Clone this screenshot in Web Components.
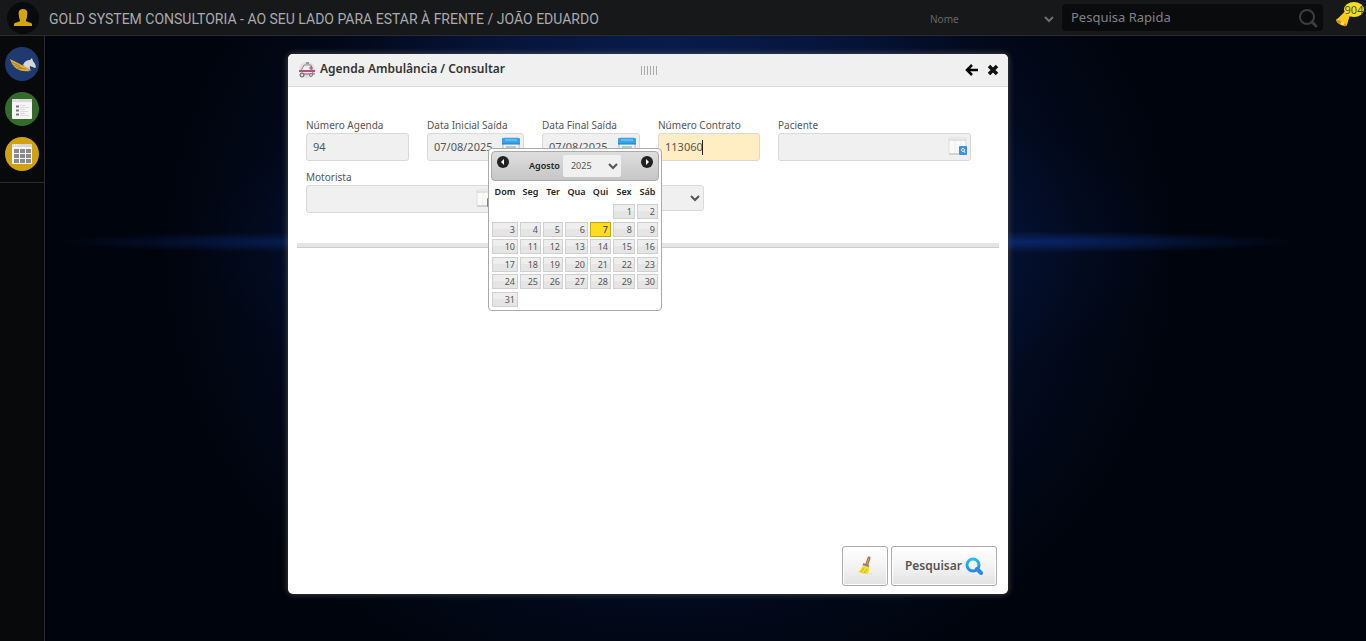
<!DOCTYPE html>
<html lang="pt-BR">
<head>
<meta charset="utf-8">
<title>Agenda Ambulância / Consultar</title>
<style>
html,body{height:100%}
body{margin:0;font-family:"Noto Sans","Open Sans",sans-serif;background:#00040c}
</style>
</head>
<body>
<gs-app>
  <gs-topbar slot="top" heading="GOLD SYSTEM CONSULTORIA - AO SEU LADO PARA ESTAR À FRENTE / JOÃO EDUARDO"></gs-topbar>
  <gs-sidebar slot="side"></gs-sidebar>
  <gs-window heading="Agenda Ambulância / Consultar">
    <gs-field size="103" label="Número Agenda" value="94"></gs-field>
    <gs-field size="97" label="Data Inicial Saída" value="07/08/2025" icon="date"></gs-field>
    <gs-field size="98" label="Data Final Saída" value="07/08/2025" icon="date"></gs-field>
    <gs-field size="102" label="Número Contrato" value="113060" active></gs-field>
    <gs-field size="193" label="Paciente" icon="lookup"></gs-field>
    <gs-field size="193" label="Motorista" icon="lookup"></gs-field>
    <gs-select size="187" name="Situação"></gs-select>
    <gs-calendar slot="popup" month="Agosto" year="2025" offset="5" days="31" selected="7"></gs-calendar>
    <gs-button slot="actions" icon="broom" name="Limpar"></gs-button>
    <gs-button slot="actions" icon="search">Pesquisar</gs-button>
  </gs-window>
</gs-app>

<script>
const icons = {
  chevron: c => `<svg width="10" height="8" viewBox="0 0 10 8" fill="none" stroke="${c}" stroke-width="2"><path d="M1 2l4 4 4-4"/></svg>`,
  date: `<svg width="20" height="20" viewBox="0 0 20 20"><rect x="2" y="1" width="16" height="18" rx="1" fill="#eef4f6" stroke="#b5bcc0"/><path d="M1 2q0-1 1-1h16q1 0 1 1v5H1z" fill="#38a3e8"/><path d="M1 7h18" stroke="#1c7cc4"/><path d="M4 3h12" stroke="#8fd0f5"/><path d="M5 10h10M5 13h10M5 16h7" stroke="#67aaa9"/></svg>`,
  lookup: `<svg width="20" height="20" viewBox="0 0 20 20"><rect x="1" y="1" width="17" height="16" rx="1" fill="#fafafa" stroke="#ddd"/><path d="M1 3h17" stroke="#c9c9c9"/><path d="M7 4v12M13 4v12" stroke="#eee"/><path d="M1 17h17" stroke="#bbb"/><rect x="11" y="9" width="8" height="9" rx="1" fill="#3f8fe8"/><circle cx="15" cy="13" r="1.5" fill="none" stroke="#e2f0ff"/><path d="M16 14l1 2" stroke="#e2f0ff"/></svg>`,
  broom: `<svg width="18" height="20" viewBox="0 0 18 20"><path d="M11 8l2-6" stroke="#a8703c" stroke-width="3" stroke-linecap="round"/><path d="M11 8l2-6" stroke="#dba468" stroke-width="1"/><path d="M7 8l6 2q1 4-1 8-6 0-10-2 4-3 5-8z" fill="#f0dc32"/><path d="M7 8l6 2" stroke="#9a7aa0" stroke-width="2"/><path d="M5 16l3-4M8 17l3-4" stroke="#d2b01c"/><path d="M13 18h3" stroke="#ddd"/></svg>`,
  search: `<svg width="18" height="18" viewBox="0 0 18 18" fill="none"><defs><linearGradient id="g" x2="0" y2="1"><stop stop-color="#25bcfa"/><stop offset="1" stop-color="#2587f0"/></linearGradient></defs><circle cx="8" cy="8" r="6" stroke="url(#g)" stroke-width="3"/><path d="M12 12l4 4" stroke="#2589f0" stroke-width="4" stroke-linecap="round"/></svg>`,
  ambulance: `<svg width="18" height="18" viewBox="0 0 18 18" fill="none"><circle cx="9" cy="9" r="8" fill="#dfdfdd"/><path d="M3 10L6 4h7l2 9" fill="#eee" stroke="#888"/><path d="M8 2h3" stroke="#555"/><path d="M1 10h16" stroke="#b54f83" stroke-width="2"/><path d="M13 5v4M11 7h4M4 13h13" stroke="#a65378"/><circle cx="4" cy="14" r="2" fill="#ddd" stroke="#555"/><circle cx="13" cy="14" r="1.5" fill="#ddd" stroke="#777"/></svg>`
};

function define(tag, css, markup) {
  customElements.define(tag, class extends HTMLElement {
    constructor() {
      super();
      this.attachShadow({mode: 'open'});
    }
    connectedCallback() {
      const t = document.createElement('template');
      t.innerHTML = `<style>:host,*{box-sizing:border-box}${css}</style>${markup(this)}`;
      this.shadowRoot.replaceChildren(t.content.cloneNode(true));
      if (this.hasAttribute('size')) this.style.setProperty('--w', this.getAttribute('size') + 'px');
    }
  });
}
const at = (el, n) => el.getAttribute(n) || '';

define('gs-app', `
  :host{display:grid;grid-template:36px 1fr / 45px 1fr;min-height:100vh;
    background:
      radial-gradient(ellipse 18% 10px at 22% 242px,rgba(10,40,112,.6),transparent),
      radial-gradient(ellipse 20% 11px at 75% 242px,rgba(12,48,130,.7),transparent),
      radial-gradient(ellipse 36% 26% at 50% 38%,rgba(8,38,108,.4),transparent),
      radial-gradient(ellipse 22% 42% at 49% 5%,rgba(12,36,96,.5),transparent),
      radial-gradient(ellipse 38% 72% at 49% 40%,#081c4c 0%,#041030 55%,#020818 80%,transparent),#00040c}
  header{grid-column:1/3;display:grid}
  main{padding:18px 18px 18px 243px;min-width:0}
  nav{display:grid}
`, () => `<header><slot name="top"></slot></header><nav><slot name="side"></slot></nav><main><slot></slot></main>`);

define('gs-topbar', `
  :host{display:flex;align-items:center;background:#17181a;border-bottom:1px solid #2b2c2e;padding:0 2px 0 7px;min-width:0}
  .avatar{flex:none;width:32px;height:32px}
  h1{margin:0 auto 0 10px;padding-top:2px;font:400 14px/20px Roboto,sans-serif;color:#a9abad;white-space:nowrap}
  .pick{display:grid;width:124px;align-items:center;padding-top:2px}
  .pick>*{grid-area:1/1}
  .pick svg{justify-self:end;pointer-events:none}
  select{appearance:none;border:0;background:none;padding:0;color:#65676a;font:10px/16px "Noto Sans",sans-serif}
  .search{display:flex;align-items:center;width:261px;height:27px;margin-left:8px;background:#0a0b0d;border-radius:4px;padding:0 5px 0 9px}
  input{flex:1;min-width:0;border:0;padding:0 0 2px;background:none;color:#8b8d8f;font:13px/18px "Noto Sans",sans-serif;outline:0}
  input::placeholder{color:#808285}
  button{border:0;background:none;padding:0;display:flex}
  .bell{position:relative;margin-left:12px;width:29px;height:32px}
  .bell span{position:absolute;right:0;top:0;width:20px;height:15px;border-radius:50%;background:#f3dc24;color:#55503a;font:11px/15px "Noto Sans",sans-serif;text-align:center}
  .bell svg{position:absolute;left:0;bottom:7px}
`, el => `
  <svg class="avatar" viewBox="0 0 32 32"><circle cx="16" cy="16" r="16" fill="#090a0c"/><path d="M16 7c4 0 5 3 4 7 0 3-1 3-1 5 0 1 5 1 6 3v2H7v-2c1-2 6-2 6-3 0-2-1-2-1-5-1-4 0-7 4-7z" fill="#d4a60e"/></svg>
  <h1>${at(el,'heading')}</h1>
  <div class="pick"><select aria-label="Campo"><option>Nome</option></select>${icons.chevron('#6c6e70')}</div>
  <div class="search"><input aria-label="Pesquisa Rapida" placeholder="Pesquisa Rapida">
    <button aria-label="Buscar"><svg width="20" height="20" viewBox="0 0 20 20" fill="none" stroke="#3b3d3f"><circle cx="9" cy="9" r="7" stroke-width="2"/><path d="M14 14l4 4" stroke-width="3" stroke-linecap="round"/></svg></button></div>
  <button class="bell" aria-label="Notificações"><svg width="17" height="17" viewBox="0 0 18 18"><path d="M11 1c5 0 6 4 4 7l-2 7q-1 2-4 1L2 12q-2-2 1-3l4-4z" fill="#fcc81c"/><ellipse cx="7" cy="14" rx="6" ry="2" transform="rotate(25 7 14)" fill="#dd9310"/><circle cx="8" cy="14" r="2" fill="#ffdb75"/></svg><span>904</span></button>`);

define('gs-sidebar', `
  :host{display:block;background:#07090b;border-right:1px solid #2a2b2d}
  div{display:grid;gap:11px;justify-items:center;padding:11px 0;border-bottom:1px solid #2a2b2d}
  a,svg{display:block}
`, () => {
  const dots = [4,10,16].map(x => [6,11,16].map(y => `<rect x="${x-2}" y="${y-1}" width="5" height="4" fill="#8a8a8a"/>`).join('')).join('');
  const frame = '<rect width="20" height="20" rx="1" fill="#f5f5f5"/><path d="M0 0h20v3H0z" fill="#d8d8d8"/><path d="M2 1h1M4 1h1M6 1h1" stroke="#fff"/>';
  return `<div>
  <a href="#" aria-label="Início"><svg width="34" height="34" viewBox="0 0 34 34"><circle cx="17" cy="17" r="17" fill="#1e3a70"/><path d="M5 12l12 6 4 1 4 5q-8 1-13-2-5-3-7-10z" fill="#dcae32"/><path d="M6 15l9 4M8 18l9 3M12 21l9 1" stroke="#8d7837" stroke-width=".7"/><path d="M18 18q2-5 7-5l2-2 1 3q2 2 3 6l-1 1-5-2q-1 2 1 5-3-3-8-6z" fill="#d5d7dc"/></svg></a>
  <a href="#" aria-label="Lista"><svg width="34" height="34" viewBox="0 0 34 34"><circle cx="17" cy="17" r="17" fill="#336b2b"/><g transform="translate(7 7)">${frame}<path d="M4 7.500h3M4 11.500h3M4 15.500h3" stroke="#777" stroke-width="2"/><path d="M8 6.500h6M8 8.500h9M8 10.500h5M8 12.500h8M8 14.500h5M8 16.500h9" stroke="#ddd"/></g></svg></a>
  <a href="#" aria-label="Grade"><svg width="34" height="34" viewBox="0 0 34 34"><circle cx="17" cy="17" r="17" fill="#d0a211"/><g transform="translate(7 7)">${frame}${dots}</g></svg></a>
</div>`;
});

define('gs-window', `
  :host{display:flex;flex-direction:column;max-width:720px;min-height:540px;background:#fff;border-radius:5px;position:relative;box-shadow:0 0 6px rgba(110,105,95,.7)}
  header{display:grid;grid-template-columns:1fr auto 1fr;align-items:center;height:33px;padding:0 9px 0 10px;background:#f0f0f0;border-bottom:1px solid #d9d9d9;border-radius:5px 5px 0 0}
  h2{display:flex;align-items:center;gap:4px;margin:0;color:#333;font:600 12px/18px "Noto Sans",sans-serif;white-space:nowrap}
  h2 span{padding-bottom:2px}
  .grip{width:16px;height:9px;background:repeating-linear-gradient(90deg,#aaa 0 1px,transparent 1px 3px)}
  .tools{display:flex;justify-content:flex-end;gap:8px}
  button{border:0;padding:0;background:none;display:flex}
  form{display:flex;flex-wrap:wrap;gap:9px 18px;padding:31px 18px 30px;align-items:flex-end}
  hr{margin:0 9px;border:0;height:5px;background:#e5e5e5;border-bottom:1px solid #ccc}
  footer{margin-top:auto;display:flex;justify-content:flex-end;gap:3px;padding:8px 11px}
  .popup{position:absolute;left:200px;top:94px}
`, el => `
  <header><h2>${icons.ambulance}<span>${at(el,'heading')}</span></h2><div class="grip"></div>
  <div class="tools"><button aria-label="Voltar"><svg width="14" height="14" viewBox="0 0 14 14" fill="none" stroke="#000" stroke-width="2.5"><path d="M7 2L2 7l5 5M2 7h11"/></svg></button>
  <button aria-label="Fechar"><svg width="12" height="14" viewBox="0 0 12 14" stroke="#111" stroke-width="3.5"><path d="M2 3l8 8M10 3l-8 8"/></svg></button></div></header>
  <form><slot></slot></form><hr>
  <footer><slot name="actions"></slot></footer>
  <div class="popup"><slot name="popup"></slot></div>`);

define('gs-field', `
  :host{display:grid;grid-template-columns:100%;width:var(--w);color:#555}
  label{font:10px/15px "Noto Sans",sans-serif;white-space:nowrap}
  .box{position:relative;display:flex;align-items:center;height:28px;border:1px solid #d9d9d9;border-radius:3px;background:#f0f0f0;padding:0 2px 0 6px}
  .active{background:#ffeec4}
  input{flex:1;min-width:0;border:0;padding:0;background:none;outline:0;color:#555;font:11px/16px "Noto Sans",sans-serif}
  button{border:0;padding:0;background:none;display:flex}
  .caret{position:absolute;left:43px;top:6px;width:1px;height:15px;background:#222}
`, el => `<label for="i">${at(el,'label')}</label>
  <div class="box ${el.hasAttribute('active') ? 'active' : ''}"><input id="i" value="${at(el,'value')}">${el.hasAttribute('active') ? '<i class="caret"></i>' : ''}${at(el,'icon') ? `<button type="button" aria-label="Abrir">${icons[at(el,'icon')]}</button>` : ''}</div>`);

define('gs-select', `
  :host{display:grid;grid-template-columns:100%;width:var(--w);align-items:center;padding-bottom:2px}
  select{grid-area:1/1;appearance:none;height:26px;border:1px solid #d9d9d9;border-radius:3px;background:#f0f0f0}
  svg{grid-area:1/1;justify-self:end;margin-right:4px;pointer-events:none}
`, el => `<select aria-label="${at(el,'name')}"><option></option></select>${icons.chevron('#555')}`);

define('gs-button', `
  :host{display:block}
  button{display:flex;align-items:center;justify-content:center;gap:3px;height:40px;padding:0 13px;border:1px solid #aaa;border-radius:3px;box-shadow:inset 0 0 0 1px #fff;background:linear-gradient(#fff,#f2f2f2 55%,#e2e2e2);color:#555;font:600 12px/18px "Noto Sans",sans-serif}
`, el => `<button type="button" ${at(el,'name') ? `aria-label="${at(el,'name')}"` : ''}><slot></slot>${icons[at(el,'icon')]}</button>`);

define('gs-calendar', `
  :host{display:block;width:174px;padding:2px;background:#fff;border:1px solid #aaa;border-radius:4px;height:163px}
  .head{display:flex;justify-content:space-between;height:30px;padding:4px 5px;border:1px solid #aaa;border-radius:4px;background:linear-gradient(#dedede,#c6c6c6)}
  .head button{border:0;padding:0;background:none;display:flex;align-items:flex-start}
  .title{display:flex;align-items:center;gap:3px;height:20px;font:600 9px/14px "Noto Sans",sans-serif;color:#222}
  .year{display:grid;align-items:center;width:58px;height:22px;background:#f0f0f0;border-radius:2px}
  .year>*{grid-area:1/1}
  .year svg{justify-self:end;margin-right:3px;pointer-events:none}
  select{appearance:none;border:0;background:none;padding:0 8px;color:#555;font:9px/16px "Noto Sans",sans-serif}
  table{width:168px;height:127px;table-layout:fixed;border-collapse:collapse}
  th{padding:0;height:22px;font:600 9px/14px "Noto Sans",sans-serif;color:#222}
  td{padding:1px;height:17px}
  td button{display:block;width:100%;height:15px;border:1px solid #d0d0d0;padding:0 2px;background:linear-gradient(#eee 50%,#e5e5e5 50%);text-align:right;color:#555;font:9px/13px "Noto Sans",sans-serif}
  td .on{background:#ffdc20;border-color:#c8a50f;color:#333}
`, el => {
  const off = +at(el,'offset'), n = +at(el,'days'), sel = +at(el,'selected');
  let rows = '';
  for (let r = 0; r * 7 < off + n; r++) {
    rows += '<tr>';
    for (let c = 0; c < 7; c++) {
      const d = r * 7 + c - off + 1;
      rows += d > 0 && d <= n ? `<td><button type="button" class="${d === sel ? 'on' : ''}">${d}</button></td>` : '<td></td>';
    }
    rows += '</tr>';
  }
  const arrow = (p, l) => `<button type="button" aria-label="${l}"><svg width="12" height="12" viewBox="0 0 12 12"><circle cx="6" cy="6" r="6" fill="#222"/><path d="${p}" fill="#fff"/></svg></button>`;
  return `<div class="head">${arrow('M7 3v6L4 6z','Anterior')}<div class="title"><span>${at(el,'month')}</span><div class="year"><select aria-label="Ano"><option>${at(el,'year')}</option></select>${icons.chevron('#555')}</div></div>${arrow('M5 3v6l3-3z','Próximo')}</div>
  <table><colgroup>${[28,23,22,25,23,24,23].map(w => `<col style="width:${w}px">`).join('')}</colgroup>
  <thead><tr>${['Dom','Seg','Ter','Qua','Qui','Sex','Sáb'].map(d => `<th>${d}</th>`).join('')}</tr></thead><tbody>${rows}</tbody></table>`;
});
</script>
</body>
</html>
